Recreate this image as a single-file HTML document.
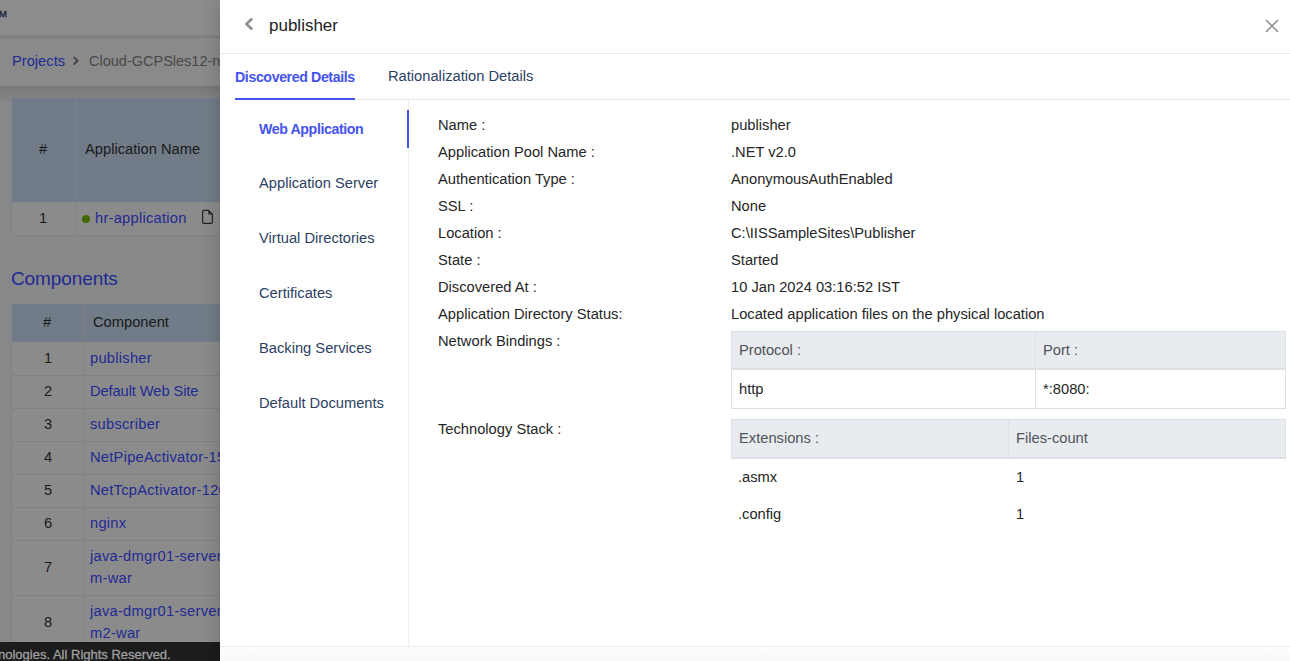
<!DOCTYPE html>
<html><head><meta charset="utf-8">
<style>
*{box-sizing:border-box;margin:0;padding:0}
html,body{width:1290px;height:661px;overflow:hidden;font-family:"Liberation Sans",sans-serif;background:#87888a;position:relative}
.a{position:absolute;white-space:nowrap;line-height:normal}
.r{position:absolute}
.bl{color:#222a93;letter-spacing:.25px}
.dk{color:#1a1a1a}
/* drawer */
#drawer{position:absolute;left:220px;top:0;width:1070px;height:661px;background:#fff;box-shadow:-2px 0 16px rgba(0,0,0,.17)}
#drawer .a{font-size:14.7px;color:#262626}
.nav{color:#2d4163 !important}
.th{color:#50545a !important}
</style></head>
<body>
<!-- ===== background page (already darkened by overlay) ===== -->
<div class="r" style="left:0;top:0;width:1290px;height:37px;background:#8c8c8c"></div>
<div class="r" style="left:0;top:35px;width:1290px;height:3px;background:linear-gradient(#878787,#7b7b7b)"></div>
<div class="r" style="left:0;top:38px;width:1290px;height:48px;background:#8a8a8a"></div>
<div class="r" style="left:0;top:86px;width:1290px;height:16px;background:linear-gradient(#787878,#7d7d7d 35%,#858688)"></div>
<span class="a" style="left:-1px;top:8px;font-size:9.5px;color:#1b2238;-webkit-text-stroke:.35px #1b2238">M</span>
<span class="a bl" style="left:12px;top:53px;font-size:14.7px;letter-spacing:0">Projects</span>
<svg class="r" style="left:71px;top:55px" width="10" height="11" viewBox="0 0 10 11"><path d="M3.2 2.5 L6.5 5.7 L3.2 9" fill="none" stroke="#474747" stroke-width="2" stroke-linecap="round" stroke-linejoin="round"/></svg>
<span class="a" style="left:89px;top:53px;font-size:14.5px;color:#484848">Cloud-GCPSles12-n</span>

<!-- table 1 -->
<div class="r" style="left:12px;top:98px;width:220px;height:104px;background:#717c88"></div>
<div class="r" style="left:12px;top:202px;width:220px;height:33px;background:#8b8b8b"></div>
<div class="r" style="left:12px;top:235px;width:220px;height:1px;background:#818181"></div>
<div class="r" style="left:11px;top:202px;width:1px;height:34px;background:#818181"></div>
<div class="r" style="left:76px;top:98px;width:1px;height:137px;background:#7b8590"></div>
<span class="a dk" style="left:39px;top:141px;font-size:14.7px">#</span>
<span class="a dk" style="left:85px;top:141px;font-size:14.7px">Application Name</span>
<span class="a dk" style="left:39px;top:210px;font-size:14.7px">1</span>
<div class="r" style="left:82px;top:215px;width:8px;height:8px;border-radius:50%;background:#436800"></div>
<span class="a bl" style="left:95px;top:210px;font-size:14.7px">hr-application</span>
<svg class="r" style="left:201px;top:209px" width="14" height="16" viewBox="0 0 14 16"><path d="M3 1.4 H7.6 L11.4 5.2 V13 Q11.4 14.4 10 14.4 H3 Q1.6 14.4 1.6 13 V2.8 Q1.6 1.4 3 1.4 Z M7.9 1.6 V5 H11.2" fill="none" stroke="#222" stroke-width="1.2" stroke-linejoin="round"/></svg>

<span class="a bl" style="left:11px;top:268px;font-size:19px;letter-spacing:-.1px">Components</span>

<!-- table 2 -->
<div class="r" style="left:12px;top:304px;width:220px;height:38px;background:#717c88"></div>
<div class="r" style="left:12px;top:342px;width:220px;height:300px;background:#8b8b8b"></div>
<div class="r" style="left:11px;top:342px;width:1px;height:300px;background:#818181"></div>
<div class="r" style="left:84px;top:304px;width:1px;height:338px;background:#818181"></div>
<span class="a dk" style="left:44px;top:350px;font-size:14.7px">1</span><span class="a bl" style="left:90px;top:350px;font-size:14.7px">publisher</span>
<div class="r" style="left:12px;top:375px;width:220px;height:1px;background:#818181"></div>
<span class="a dk" style="left:44px;top:383px;font-size:14.7px">2</span><span class="a bl" style="left:90px;top:383px;font-size:14.7px;letter-spacing:-.1px">Default Web Site</span>
<div class="r" style="left:12px;top:408px;width:220px;height:1px;background:#818181"></div>
<span class="a dk" style="left:44px;top:416px;font-size:14.7px">3</span><span class="a bl" style="left:90px;top:416px;font-size:14.7px">subscriber</span>
<div class="r" style="left:12px;top:441px;width:220px;height:1px;background:#818181"></div>
<span class="a dk" style="left:44px;top:449px;font-size:14.7px">4</span><span class="a bl" style="left:90px;top:449px;font-size:14.7px">NetPipeActivator-15</span>
<div class="r" style="left:12px;top:474px;width:220px;height:1px;background:#818181"></div>
<span class="a dk" style="left:44px;top:482px;font-size:14.7px">5</span><span class="a bl" style="left:90px;top:482px;font-size:14.7px">NetTcpActivator-120</span>
<div class="r" style="left:12px;top:507px;width:220px;height:1px;background:#818181"></div>
<span class="a dk" style="left:44px;top:515px;font-size:14.7px">6</span><span class="a bl" style="left:90px;top:515px;font-size:14.7px">nginx</span>
<div class="r" style="left:12px;top:540px;width:220px;height:1px;background:#818181"></div>
<span class="a dk" style="left:44px;top:559px;font-size:14.7px">7</span><span class="a bl" style="left:90px;top:548px;font-size:14.7px">java-dmgr01-server</span><span class="a bl" style="left:90px;top:570px;font-size:14.7px">m-war</span>
<div class="r" style="left:12px;top:595px;width:220px;height:1px;background:#818181"></div>
<span class="a dk" style="left:44px;top:614px;font-size:14.7px">8</span><span class="a bl" style="left:90px;top:603px;font-size:14.7px">java-dmgr01-server</span><span class="a bl" style="left:90px;top:625px;font-size:14.7px">m2-war</span>
<span class="a dk" style="left:43px;top:314px;font-size:14.7px">#</span>
<span class="a dk" style="left:93px;top:314px;font-size:14.7px">Component</span>

<!-- footer -->
<div class="r" style="left:0;top:642px;width:1290px;height:19px;background:#1c1c1c"></div>
<span class="a" style="left:-2px;top:647px;font-size:13px;color:#a0a0a0;-webkit-text-stroke:.3px #a0a0a0">nologies. All Rights Reserved.</span>

<!-- ===== drawer ===== -->
<div id="drawer">
  <svg class="r" style="left:24px;top:17px" width="12" height="15" viewBox="0 0 12 15"><path d="M7.5 2.3 L2.4 7 L7.5 11.7" fill="none" stroke="#8c8c8c" stroke-width="2.6" stroke-linecap="round" stroke-linejoin="round"/></svg>
  <span class="a" style="left:49px;top:16px;font-size:17px !important;color:#222">publisher</span>
  <svg class="r" style="left:1045px;top:19px" width="14" height="14" viewBox="0 0 14 14"><path d="M1 1 L13 13 M13 1 L1 13" fill="none" stroke="#8a8a8a" stroke-width="1.5"/></svg>
  <div class="r" style="left:0;top:53px;width:1070px;height:1px;background:#ebebeb"></div>

  <span class="a" style="left:15px;top:69px;font-size:14.2px !important;font-weight:bold;letter-spacing:-.4px;color:#4553ee !important">Discovered Details</span>
  <span class="a nav" style="left:168px;top:68px">Rationalization Details</span>
  <div class="r" style="left:15px;top:99px;width:1055px;height:1px;background:#e8e8e8"></div>
  <div class="r" style="left:15px;top:98px;width:120px;height:2px;background:#4553ee"></div>

  <!-- left nav -->
  <div class="r" style="left:188px;top:100px;width:1px;height:546px;background:#efefef"></div>
  <div class="r" style="left:187px;top:110px;width:2px;height:38px;background:#4553ee"></div>
  <span class="a" style="left:39px;top:121px;font-size:14.2px !important;font-weight:bold;letter-spacing:-.4px;color:#4553ee !important">Web Application</span>
  <span class="a nav" style="left:39px;top:175px">Application Server</span>
  <span class="a nav" style="left:39px;top:230px">Virtual Directories</span>
  <span class="a nav" style="left:39px;top:285px">Certificates</span>
  <span class="a nav" style="left:39px;top:340px">Backing Services</span>
  <span class="a nav" style="left:39px;top:395px">Default Documents</span>

  <span class="a" style="left:218px;top:117px">Name :</span>
<span class="a" style="left:511px;top:117px">publisher</span>
<span class="a" style="left:218px;top:144px">Application Pool Name :</span>
<span class="a" style="left:511px;top:144px">.NET v2.0</span>
<span class="a" style="left:218px;top:171px">Authentication Type :</span>
<span class="a" style="left:511px;top:171px">AnonymousAuthEnabled</span>
<span class="a" style="left:218px;top:198px">SSL :</span>
<span class="a" style="left:511px;top:198px">None</span>
<span class="a" style="left:218px;top:225px">Location :</span>
<span class="a" style="left:511px;top:225px">C:\IISSampleSites\Publisher</span>
<span class="a" style="left:218px;top:252px">State :</span>
<span class="a" style="left:511px;top:252px">Started</span>
<span class="a" style="left:218px;top:279px">Discovered At :</span>
<span class="a" style="left:511px;top:279px">10 Jan 2024 03:16:52 IST</span>
<span class="a" style="left:218px;top:306px">Application Directory Status:</span>
<span class="a" style="left:511px;top:306px">Located application files on the physical location</span>
<span class="a" style="left:218px;top:333px">Network Bindings :</span>
<span class="a" style="left:218px;top:421px">Technology Stack :</span>

  <!-- network bindings table -->
  <div class="r" style="left:511px;top:331px;width:555px;height:78px;border:1px solid #dde0e5;background:#fff"></div>
  <div class="r" style="left:512px;top:332px;width:553px;height:38px;background:#e8ebef;border-bottom:2px solid #dde0e5"></div>
  <div class="r" style="left:815px;top:332px;width:1px;height:76px;background:#dde0e5"></div>
  <span class="a th" style="left:519px;top:342px">Protocol :</span>
  <span class="a th" style="left:823px;top:342px">Port :</span>
  <span class="a" style="left:519px;top:381px">http</span>
  <span class="a" style="left:823px;top:381px">*:8080:</span>

  <!-- tech stack table -->
  <div class="r" style="left:511px;top:419px;width:555px;height:40px;border:1px solid #dde0e5;border-bottom:2px solid #dde0e5;background:#e8ebef"></div>
  <div class="r" style="left:788px;top:420px;width:1px;height:37px;background:#dde0e5"></div>
  <span class="a th" style="left:519px;top:430px">Extensions :</span>
  <span class="a th" style="left:796px;top:430px">Files-count</span>
  <span class="a" style="left:518px;top:469px">.asmx</span>
  <span class="a" style="left:796px;top:469px">1</span>
  <span class="a" style="left:518px;top:506px">.config</span>
  <span class="a" style="left:796px;top:506px">1</span>

  <div class="r" style="left:0;top:646px;width:1070px;height:1px;background:#ececec"></div>
  <div class="r" style="left:0;top:647px;width:1070px;height:14px;background:linear-gradient(#fefefe,#f9f9f9)"></div>
</div>
</body></html>
